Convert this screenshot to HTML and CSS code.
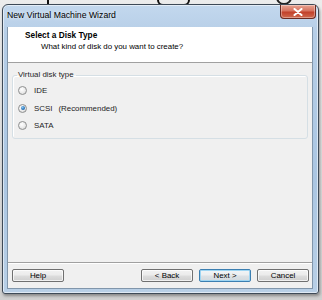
FILE: index.html
```html
<!DOCTYPE html>
<html>
<head>
<meta charset="utf-8">
<link rel="stylesheet" href="styles.css">
</head>
<body>
<div class="desktop">
  <div class="behind bar1"></div>
  <div class="behind box1"></div>
  <div class="behind ring1"></div>
  <div class="window">
    <div class="titlebar">
      <span class="title">New Virtual Machine Wizard</span>
      <button class="close" aria-label="Close">
        <svg width="10" height="8" viewBox="0 0 10 8"><path d="M1.5 1 L8.5 7 M8.5 1 L1.5 7" stroke="#ffffff" stroke-width="2" stroke-linecap="round"/></svg>
      </button>
    </div>
    <div class="client">
      <div class="header">
        <div class="h-title">Select a Disk Type</div>
        <div class="h-sub">What kind of disk do you want to create?</div>
      </div>
      <div class="body">
        <fieldset class="group">
          <legend class="legend">Virtual disk type</legend>
          <label class="row"><span class="radio"></span><span>IDE</span></label>
          <label class="row"><span class="radio checked"></span><span>SCSI</span><span class="rec">(Recommended)</span></label>
          <label class="row"><span class="radio"></span><span>SATA</span></label>
        </fieldset>
      </div>
      <div class="footer">
        <button class="btn">Help</button>
        <div class="spacer"></div>
        <button class="btn">&lt; Back</button>
        <button class="btn default">Next &gt;</button>
        <button class="btn">Cancel</button>
      </div>
    </div>
  </div>
</div>
</body>
</html>
```

FILE: styles.css
```css
* { box-sizing: border-box; }
html, body { margin: 0; padding: 0; }
body {
  width: 322px;
  height: 300px;
  overflow: hidden;
  font-family: "Liberation Sans", Arial, sans-serif;
  background: #d9d9d9;
}
.desktop {
  position: relative;
  width: 322px;
  height: 300px;
  background: linear-gradient(#ececec, #d0d0d0);
  padding: 4px 0 0 2px;
}
.behind { position: absolute; }
.bar1 { left: 47px; top: 0; width: 2px; height: 5px; background: #111; }
.box1 { left: 157px; top: -10px; width: 33px; height: 16px; border: 2px solid #111; border-radius: 0 0 6px 6px; }
.ring1 { left: 276px; top: -10px; width: 16px; height: 15px; border: 2px solid #222; border-radius: 50%; }

.window {
  position: relative;
  width: 317px;
  height: 290px;
  border: 1px solid #3e4a57;
  border-radius: 6px 6px 3px 3px;
  background: linear-gradient(180deg, #c3d8ee 0%, #b6cee7 10%, #abc6e2 60%, #b8cfe6 100%);
  box-shadow: inset 0 0 0 1px rgba(255,255,255,0.55), 1px 2px 3px rgba(0,0,0,0.35);
  padding: 0 5px 4px 4px;
  display: flex;
  flex-direction: column;
}
.titlebar {
  height: 22px;
  padding-top: 5px;
  flex: none;
}
.title {
  display: block;
  font-size: 8.7px;
  line-height: 10px;
  color: #000;
  text-shadow: 0 0 4px rgba(255,255,255,0.9);
}
.close {
  position: absolute;
  top: 0;
  right: 2px;
  width: 36px;
  height: 14px;
  padding: 0;
  border: 1px solid #6a2a22;
  border-top: none;
  border-radius: 0 0 4px 4px;
  background: linear-gradient(180deg, #e8a493 0%, #d6735f 45%, #c2412b 55%, #cf6a4f 100%);
  box-shadow: inset 0 0 0 1px rgba(255,255,255,0.35);
  display: flex;
  align-items: center;
  justify-content: center;
}
.close svg { display: block; }

.client {
  flex: 1;
  display: flex;
  flex-direction: column;
  background: #f0f0f0;
  border: 1px solid #8196ab;
  border-top: none;
}
.header {
  height: 36px;
  flex: none;
  background: #fff;
  border-bottom: 1px solid #a0a0a0;
  padding: 3px 0 0 17px;
}
.h-title {
  font-weight: bold;
  font-size: 8.3px;
  line-height: 10px;
  color: #000;
}
.h-sub {
  margin: 2px 0 0 16px;
  font-size: 7.9px;
  line-height: 10px;
  color: #000;
}
.body {
  flex: 1;
  padding: 7px 4px 0 4px;
}
.group {
  margin: 0;
  padding: 2px 0 3px 5px;
  border: 1px solid #d5dfe5;
  border-radius: 3px;
  display: flex;
  flex-direction: column;
  box-shadow: inset 1px 1px 0 #fff;
}
.legend {
  padding: 0 2px 0 1px;
  margin-left: -1px;
  font-size: 7.9px;
  line-height: 10px;
  color: #1e1e1e;
}
.row {
  height: 17.5px;
  display: flex;
  align-items: center;
  font-size: 7.9px;
  color: #1e1e1e;
}
.radio {
  width: 9px;
  height: 9px;
  border-radius: 50%;
  border: 1px solid #8e8f8f;
  background: radial-gradient(circle at 40% 35%, #ffffff 0%, #ececec 50%, #cfcfcf 100%);
  margin-right: 7px;
  position: relative;
  flex: none;
}
.radio.checked::after {
  content: "";
  position: absolute;
  left: 1.5px;
  top: 1.5px;
  width: 4px;
  height: 4px;
  border-radius: 50%;
  background: radial-gradient(circle at 40% 35%, #8ec8f0 0%, #2a78c0 55%, #184f88 100%);
}
.rec { margin-left: 6px; }

.footer {
  flex: none;
  height: 26px;
  border-top: 1px solid #a0a0a0;
  box-shadow: inset 0 1px 0 #ffffff;
  padding: 6px 3px 0 4px;
  display: flex;
  align-items: flex-start;
  gap: 6px;
}
.spacer { flex: 1; }
.btn {
  width: 52px;
  height: 13px;
  padding: 0;
  border: 1px solid #707070;
  border-radius: 2px;
  background: linear-gradient(180deg, #f2f2f2 0%, #ebebeb 48%, #dddddd 52%, #cfcfcf 100%);
  box-shadow: inset 0 0 0 1px rgba(255,255,255,0.7);
  font-family: "Liberation Sans", Arial, sans-serif;
  font-size: 7.9px;
  line-height: 11px;
  color: #000;
  text-align: center;
}
.btn.default {
  border-color: #3c7fb1;
  box-shadow: inset 0 0 0 1px #9fd6f3;
  background: linear-gradient(180deg, #f2f5f7 0%, #ebeef0 48%, #dde2e6 52%, #d2d9de 100%);
}
```
